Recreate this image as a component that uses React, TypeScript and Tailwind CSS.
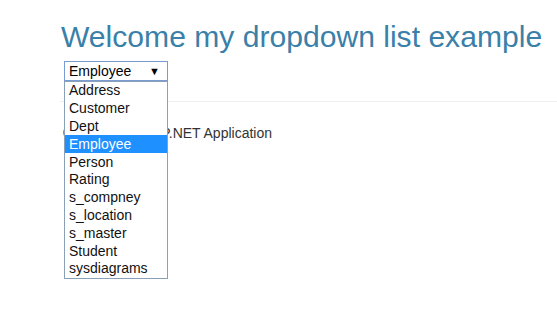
import React from 'react'

const tables = [
  'Address',
  'Customer',
  'Dept',
  'Employee',
  'Person',
  'Rating',
  's_compney',
  's_location',
  's_master',
  'Student',
  'sysdiagrams',
]

const DropdownList = ({ selected }: { selected: string }) => {
  return (
    <div className="relative ml-[4px] w-[104px]">
      <div className="flex h-[20px] items-center justify-between border border-[#7a9cd3] bg-white pl-[4px] pr-[7px] text-[14px] text-black">
        <span>{selected}</span>
        <span className="text-[11px]">▼</span>
      </div>
      <ul className="absolute left-0 top-[20px] z-10 w-[104px] border border-[#8a9fb8] bg-white text-[14px] text-[#111]">
        {tables.map((t) => (
          <li
            key={t}
            className={
              t === selected
                ? 'flex h-[17.8px] items-center bg-[#1e90ff] pl-[4px] text-white'
                : 'flex h-[17.8px] items-center pl-[4px]'
            }
          >
            {t}
          </li>
        ))}
      </ul>
    </div>
  )
}

export default function App() {
  return (
    <div className="h-[313px] w-[557px] overflow-hidden bg-white font-['Liberation_Sans',Arial,sans-serif]">
      <div className="pl-[60px]">
        <h2 className="pl-[1px] pt-[20px] text-[30.1px] leading-[33px] text-[#3a80a8]">
          Welcome my dropdown list example
        </h2>
        <div className="mt-[8px]">
          <DropdownList selected="Employee" />
        </div>
        <hr className="mt-[20px] border-t border-[#eeeeee]" />
        <footer className="pl-[3px] pt-[21px] text-[14px] text-[#333]">
          <p>© 2016 - My ASP.NET Application</p>
        </footer>
      </div>
    </div>
  )
}
